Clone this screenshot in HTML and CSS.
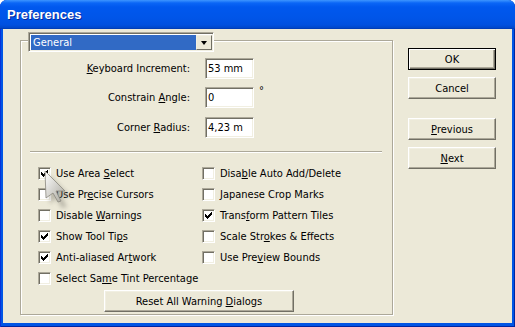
FILE: index.html
```html
<!DOCTYPE html>
<html lang="en">
<head>
    <meta charset="UTF-8">
    <title>Preferences</title>
    <link rel="stylesheet" href="styles.css">
</head>
<body>
    <div class="window">
        <div class="titlebar">Preferences</div>
        <div class="client">
            <div class="groupbox">
                <div class="combo">
                    <div class="combo-value">General</div>
                    <div class="combo-btn"><span class="arrow"></span></div>
                </div>

                <div class="field first">
                    <label><u>K</u>eyboard Increment:</label>
                    <div class="edit">53 mm</div>
                </div>
                <div class="field">
                    <label>Constrain <u>A</u>ngle:</label>
                    <div class="edit">0</div>
                    <span class="unit">°</span>
                </div>
                <div class="field last">
                    <label>Corner <u>R</u>adius:</label>
                    <div class="edit">4,23 m</div>
                </div>

                <div class="separator"></div>

                <div class="options">
                    <div class="option"><span class="check on"></span><span>Use Area <u>S</u>elect</span></div>
                    <div class="option"><span class="check"></span><span>Disa<u>b</u>le Auto Add/Delete</span></div>
                    <div class="option"><span class="check"></span><span>Use Pr<u>e</u>cise Cursors</span></div>
                    <div class="option"><span class="check"></span><span><u>J</u>apanese Crop Marks</span></div>
                    <div class="option"><span class="check"></span><span>Disable <u>W</u>arnings</span></div>
                    <div class="option"><span class="check on"></span><span>Trans<u>f</u>orm Pattern Tiles</span></div>
                    <div class="option"><span class="check on"></span><span>Show Tool Ti<u>p</u>s</span></div>
                    <div class="option"><span class="check"></span><span>Scale Str<u>o</u>kes &amp; Effects</span></div>
                    <div class="option"><span class="check on"></span><span>Anti-aliased Ar<u>t</u>work</span></div>
                    <div class="option"><span class="check"></span><span>Use Pre<u>v</u>iew Bounds</span></div>
                    <div class="option"><span class="check"></span><span>Select Sa<u>m</u>e Tint Percentage</span></div>
                </div>

                <button class="btn reset">Reset All Warning <u>D</u>ialogs</button>

                <svg class="cursor" width="30" height="40" viewBox="0 0 30 40">
                    <defs>
                        <filter id="soft" x="-30%" y="-30%" width="160%" height="160%">
                            <feGaussianBlur stdDeviation="2"/>
                        </filter>
                        <linearGradient id="shade" x1="0" y1="0" x2="1" y2="1">
                            <stop offset="0" stop-color="#ffffff"/>
                            <stop offset="1" stop-color="#a9a79d"/>
                        </linearGradient>
                    </defs>
                    <path d="M5 5 L27 27 L17 26 L23 37 L18 38 L12 28 L6 34 Z" fill="#6e6c64" opacity="0.4" filter="url(#soft)"/>
                    <path d="M1 1 L21 21 L12 21 L17 31 L14 32 L9 23 L2 28 Z" fill="url(#shade)" stroke="#8a887f" stroke-width="0.8"/>
                </svg>
            </div>

            <div class="actions">
                <button class="btn default">OK</button>
                <button class="btn">Cancel</button>
                <button class="btn spaced"><u>P</u>revious</button>
                <button class="btn"><u>N</u>ext</button>
            </div>
        </div>
    </div>
</body>
</html>
```

FILE: styles.css
```css
body {
    margin: 0;
    background: #ffffff;
    font-family: 'DejaVu Sans Condensed', 'Liberation Sans', sans-serif;
    font-size: 11px;
    color: #000;
}

.window {
    width: 515px;
    height: 327px;
    display: flex;
    flex-direction: column;
    background: #0055e5;
    border-radius: 7px 7px 0 0;
    overflow: hidden;
    box-shadow: inset 1px 0 0 #0831d9, inset -1px 0 0 #0025a0, inset 0 -1px 0 #0025a0;
}

.titlebar {
    height: 29px;
    line-height: 29px;
    padding-left: 7px;
    color: #fff;
    font-family: 'Liberation Sans', Arial, sans-serif;
    font-weight: bold;
    font-size: 13px;
    text-shadow: 1px 1px 0 #0a2a9c;
    background: linear-gradient(#3d95ff 0, #0a66f6 3px, #0058ee 7px, #0055e8 18px, #0050df 25px, #0046c8 28px, #0035a8 29px);
}

.client {
    flex: 1;
    margin: 0 3px 4px 3px;
    background: #ece9d8;
    display: flex;
    align-items: flex-start;
    padding: 11px 0 0 17px;
}

/* etched group box */
.groupbox {
    position: relative;
    box-sizing: border-box;
    width: 373px;
    height: 275px;
    border: 1px solid #aca899;
    box-shadow: inset 1px 1px 0 #fff, 1px 1px 0 #fff;
}

.combo {
    display: flex;
    box-sizing: border-box;
    width: 186px;
    height: 20px;
    margin: -9px 0 0 7px;
    padding: 1px;
    background: #fff;
    border: 1px solid;
    border-color: #aca899 #fff #fff #aca899;
    box-shadow: inset 1px 1px 0 #716f64, inset -1px -1px 0 #f1efe2;
}

.combo-value {
    flex: 1;
    margin: 1px 0 0 1px;
    background: #316ac5;
    color: #fff;
    padding-left: 2px;
    line-height: 15px;
}

.combo-btn {
    width: 16px;
    box-sizing: border-box;
    margin-top: 1px;
    background: #ece9d8;
    border: 1px solid;
    border-color: #f1efe2 #716f64 #716f64 #f1efe2;
    display: flex;
    align-items: center;
    justify-content: center;
}

.arrow {
    width: 0;
    height: 0;
    border-left: 3.5px solid transparent;
    border-right: 3.5px solid transparent;
    border-top: 4px solid #000;
}

.field {
    display: flex;
    align-items: center;
    height: 21px;
    margin-top: 8px;
}

.field.first {
    margin-top: 6px;
}

.field.last {
    margin-top: 9px;
}

.field label {
    width: 169px;
    text-align: right;
    margin-right: 15px;
}

.edit {
    box-sizing: border-box;
    width: 49px;
    height: 21px;
    padding: 2px 0 0 2px;
    background: #fff;
    border: 1px solid;
    border-color: #aca899 #fff #fff #aca899;
    box-shadow: inset 1px 1px 0 #716f64, inset -1px -1px 0 #f1efe2;
    line-height: 16px;
}

.unit {
    align-self: flex-start;
    margin: -3px 0 0 5px;
}

.separator {
    width: 352px;
    margin: 13px 0 0 9px;
    border-top: 1px solid #aca899;
    border-bottom: 1px solid #fff;
}

.options {
    display: grid;
    grid-template-columns: 164px auto;
    row-gap: 8px;
    margin: 14px 0 0 17px;
}

.option {
    display: flex;
    align-items: center;
    height: 13px;
    line-height: 13px;
    white-space: nowrap;
}

.check {
    box-sizing: border-box;
    width: 13px;
    height: 13px;
    margin-right: 5px;
    flex-shrink: 0;
    background: #fff;
    border: 1px solid;
    border-color: #aca899 #fff #fff #aca899;
    box-shadow: inset 1px 1px 0 #716f64, inset -1px -1px 0 #f1efe2;
}

.check.on {
    background: #fff url("data:image/svg+xml;utf8,<svg xmlns='http://www.w3.org/2000/svg' width='11' height='11'><path d='M2 4h1v1h1v1h1V5h1V4h1V3h1V2h1v3H8v1H7v1H6v1H5v1H4V8H3V7H2z' fill='black'/></svg>") no-repeat 0 0;
}

.btn {
    box-sizing: border-box;
    display: block;
    width: 88px;
    height: 22px;
    padding: 0;
    font: inherit;
    color: #000;
    background: #ece9d8;
    border: 1px solid;
    border-color: #fff #716f64 #716f64 #fff;
    box-shadow: inset -1px -1px 0 #aca899, inset 1px 1px 0 #f1efe2;
}

.btn.default {
    border: 1px solid #000;
    box-shadow: inset 1px 1px 0 #fff, inset -1px -1px 0 #716f64, inset -2px -2px 0 #aca899;
}

.reset {
    width: 190px;
    margin: 5px 0 0 83px;
}

.actions {
    margin: 8px 0 0 15px;
    display: flex;
    flex-direction: column;
    gap: 7px;
}

.actions .spaced {
    margin-top: 12px;
}

.cursor {
    position: absolute;
    left: 23px;
    top: 129px;
}
```
